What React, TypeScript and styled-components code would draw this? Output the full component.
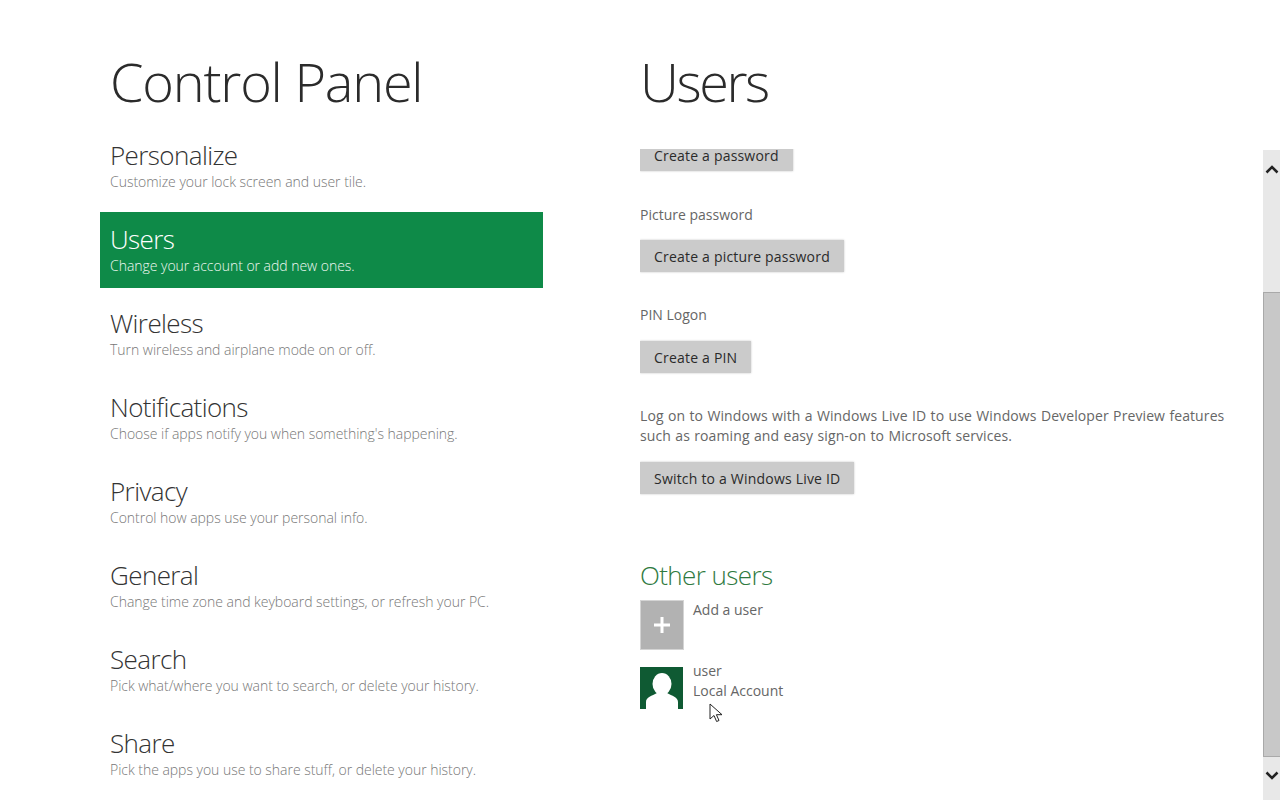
import React from 'react'
import styled, { createGlobalStyle } from 'styled-components'

const GlobalStyle = createGlobalStyle`
  html, body {
    margin: 0;
    padding: 0;
    height: 100%;
    overflow: hidden;
    background: #ffffff;
    font-family: "Open Sans", "Noto Sans", sans-serif;
  }
`

const Page = styled.div`
  display: grid;
  grid-template-columns: 640px 623px 17px;
  width: 1280px;
  height: 800px;
  overflow: hidden;
  background: #ffffff;
`

const LeftPane = styled.div`
  padding-left: 100px;
`

const RightPane = styled.div`
  display: flex;
  flex-direction: column;
  min-width: 0;
`

const PageTitle = styled.h1<{ $left?: number; $spacing: number }>`
  margin: 0;
  box-sizing: border-box;
  height: 128px;
  padding: 28px 0 0 ${(p) => p.$left ?? 0}px;
  font-size: 54px;
  line-height: 106px;
  font-weight: 300;
  letter-spacing: ${(p) => p.$spacing}px;
  color: #2b2b2b;
`

const Nav = styled.div`
  display: flex;
  flex-direction: column;
  gap: 8px;
  width: 443px;
`

const NavItem = styled.div<{ $active?: boolean }>`
  height: 76px;
  box-sizing: border-box;
  padding: 9px 10px 0;
  background: ${(p) => (p.$active ? '#0e8a48' : 'transparent')};
  color: ${(p) => (p.$active ? '#ffffff' : '#333333')};
`

const NavTitle = styled.div`
  font-size: 26px;
  font-weight: 300;
  line-height: 36px;
  letter-spacing: -0.6px;
`

const NavText = styled.div<{ $active?: boolean }>`
  margin-top: -1px;
  font-size: 14px;
  font-weight: 300;
  line-height: 20px;
  letter-spacing: -0.03px;
  color: ${(p) => (p.$active ? '#eef8f1' : '#777777')};
`

const Scroller = styled.div`
  height: 651px;
  margin-top: 21px;
  overflow: hidden;
`

const Content = styled.div`
  display: flex;
  flex-direction: column;
  align-items: flex-start;
  margin-top: -10px;
`

const Label = styled.div<{ $top: number }>`
  margin-top: ${(p) => p.$top}px;
  font-size: 14px;
  line-height: 20px;
  color: #666666;
  letter-spacing: 0;
`

const Paragraph = styled(Label)`
  width: 600px;
  letter-spacing: 0.1px;
  word-spacing: 0.6px;
`

const ActionButton = styled.button<{ $top: number }>`
  margin-top: ${(p) => p.$top}px;
  height: 32px;
  padding: 1px 14px 0;
  border: none;
  border-radius: 0;
  background: #cbcbcb;
  box-shadow: 0 0 2px #c4c4c4;
  font-family: inherit;
  font-size: 14px;
  font-weight: 500;
  letter-spacing: 0.2px;
  color: #2a2a2a;
`

const SectionTitle = styled.h2`
  margin: 63px 0 0;
  font-size: 26px;
  font-weight: 300;
  line-height: 36px;
  letter-spacing: -0.6px;
  color: #2f7a3f;
`

const UserRow = styled.div<{ $top: number }>`
  display: flex;
  align-items: flex-start;
  gap: 9px;
  margin-top: ${(p) => p.$top}px;
  position: relative;
`

const AddTile = styled.div`
  width: 42px;
  height: 48px;
  background: #b2b2b2;
  border: 1px solid #d4d4d4;
  display: flex;
  align-items: center;
  justify-content: center;
`

const Avatar = styled.div`
  width: 43px;
  height: 42px;
  display: flex;
`

const UserText = styled.div<{ $lift?: number }>`
  font-size: 14px;
  line-height: 20px;
  color: #666666;
  margin-top: ${(p) => p.$lift ?? 0}px;
`

const UserName = styled(UserText)`
  margin-left: 1px;
`

const Pointer = styled.svg`
  position: absolute;
  left: 69px;
  top: 36px;
`

const ScrollBar = styled.div`
  margin-top: 150px;
  height: 650px;
  background: #e8e8e8;
  display: flex;
  flex-direction: column;
  align-items: center;
`

const ArrowSlot = styled.div`
  height: 142px;
  flex: none;
  display: flex;
  justify-content: center;
  padding-top: 14px;
  box-sizing: border-box;
`

const Thumb = styled.div`
  width: 100%;
  height: 465px;
  flex: none;
  box-sizing: border-box;
  background: #c8c8c8;
  border: 1px solid #a9a9a9;
  border-width: 1px 0 1px 1px;
`

const DownSlot = styled.div`
  flex: 1;
  display: flex;
  justify-content: center;
  padding-top: 14px;
`

const items = [
  { title: 'Personalize', text: 'Customize your lock screen and user tile.' },
  { title: 'Users', text: 'Change your account or add new ones.', active: true },
  { title: 'Wireless', text: 'Turn wireless and airplane mode on or off.' },
  { title: 'Notifications', text: "Choose if apps notify you when something's happening." },
  { title: 'Privacy', text: 'Control how apps use your personal info.' },
  { title: 'General', text: 'Change time zone and keyboard settings, or refresh your PC.' },
  { title: 'Search', text: 'Pick what/where you want to search, or delete your history.' },
  { title: 'Share', text: 'Pick the apps you use to share stuff, or delete your history.' },
]

const App: React.FC = () => {
  return (
    <Page>
      <GlobalStyle />
      <LeftPane>
        <PageTitle $left={10} $spacing={-1.2}>
          Control Panel
        </PageTitle>
        <Nav>
          {items.map((item) => (
            <NavItem key={item.title} $active={item.active}>
              <NavTitle>{item.title}</NavTitle>
              <NavText $active={item.active}>{item.text}</NavText>
            </NavItem>
          ))}
        </Nav>
      </LeftPane>

      <RightPane>
        <PageTitle $spacing={-2.4}>Users</PageTitle>
        <Scroller>
          <Content>
            <ActionButton $top={0}>Create a password</ActionButton>
            <Label $top={34}>Picture password</Label>
            <ActionButton $top={15}>Create a picture password</ActionButton>
            <Label $top={33}>PIN Logon</Label>
            <ActionButton $top={16}>Create a PIN</ActionButton>
            <Paragraph $top={33}>
              Log on to Windows with a Windows Live ID to use Windows Developer Preview features
              such as roaming and easy sign-on to Microsoft services.
            </Paragraph>
            <ActionButton $top={16}>Switch to a Windows Live ID</ActionButton>
            <SectionTitle>Other users</SectionTitle>
            <UserRow $top={7}>
              <AddTile>
                <svg width="18" height="18" viewBox="0 0 18 18">
                  <path d="M9 1v16M1 9h16" stroke="#ffffff" strokeWidth="3" fill="none" />
                </svg>
              </AddTile>
              <UserText>Add a user</UserText>
            </UserRow>
            <UserRow $top={17}>
              <Avatar>
                <svg width="43" height="42" viewBox="0 0 43 42">
                  <rect width="43" height="42" fill="#0f5a33" />
                  <ellipse cx="22" cy="17" rx="9.500" ry="11" fill="#ffffff" />
                  <path d="M6 42v-7c0-5 6-6 11-9h10c5 3 11 4 11 9v7z" fill="#ffffff" />
                </svg>
              </Avatar>
              <UserName $lift={-6}>
                user
                <br />
                Local Account
              </UserName>
              <Pointer width="14" height="20" viewBox="0 0 14 20">
                <path
                  d="M1 1v15l4-3.500 2.600 6 2.400-1-2.600-5.800H13z"
                  fill="#ffffff"
                  stroke="#222222"
                  strokeWidth="1"
                />
              </Pointer>
            </UserRow>
          </Content>
        </Scroller>
      </RightPane>

      <ScrollBar>
        <ArrowSlot>
          <svg width="14" height="10" viewBox="0 0 14 10">
            <path d="M1.500 8.500 7 3l5.500 5.500" stroke="#222222" strokeWidth="2.500" fill="none" />
          </svg>
        </ArrowSlot>
        <Thumb />
        <DownSlot>
          <svg width="14" height="10" viewBox="0 0 14 10">
            <path d="M1.500 1.500 7 7l5.500-5.500" stroke="#222222" strokeWidth="2.500" fill="none" />
          </svg>
        </DownSlot>
      </ScrollBar>
    </Page>
  )
}

export default App
